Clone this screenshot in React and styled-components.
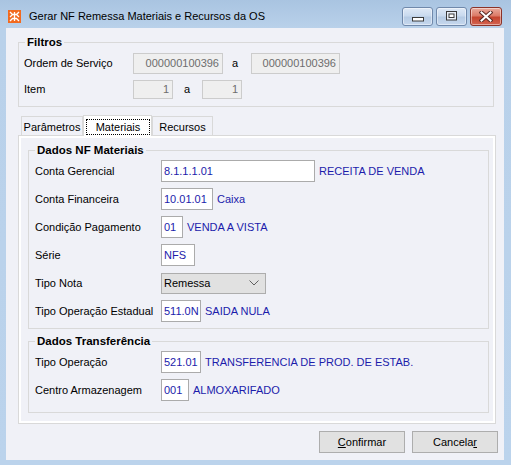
import React from "react";
import styled, { createGlobalStyle } from "styled-components";

const GlobalStyle = createGlobalStyle`
  html, body { margin: 0; padding: 0; }
  body {
    width: 511px; height: 465px; overflow: hidden;
    font-family: "Liberation Sans", Arial, sans-serif;
    font-size: 11px; color: #000;
  }
  * { box-sizing: border-box; }
`;

const BG = "#f0f1f7";
const BLUE = "#1c1cab";

const Window = styled.div`
  width: 511px; height: 465px;
  display: flex; flex-direction: column;
  background: linear-gradient(180deg, #a9c4e1 0px, #b9d1ea 28px, #bbd3ec 100%);
`;

const TitleBar = styled.div`
  height: 28px; flex-shrink: 0;
  display: flex; align-items: center;
  padding: 4px 9px 0 8px;
`;

const Title = styled.span`
  margin-left: 8px;
  font-size: 11px;
  color: #000;
  white-space: nowrap;
`;

const Controls = styled.div`
  margin-left: auto;
  display: flex; gap: 3px;
`;

const CaptionButton = styled.div`
  width: ${(p) => p.$w}px; height: 19px;
  border-radius: 3px;
  border: 1px solid ${(p) => (p.$close ? "#8b3329" : "#7089ab")};
  background: ${(p) =>
    p.$close
      ? "linear-gradient(180deg, #e9ab9d 0%, #dc7b68 45%, #c5452f 55%, #d36350 100%)"
      : "linear-gradient(180deg, #dfe9f6 0%, #c9daee 45%, #b6cbe4 55%, #c6d8ee 100%)"};
  box-shadow: inset 0 0 0 1px rgba(255, 255, 255, 0.45);
  display: flex; align-items: center; justify-content: center;
`;

const Client = styled.div`
  flex: 1;
  margin: 0 7px 5px 6px;
  background: ${BG};
  display: flex; flex-direction: column;
  padding: 7px 6px 0 12px;
`;

const Group = styled.fieldset`
  margin: ${(p) => p.$m || "0"};
  padding: 0;
  border: 1px solid #d9d9d9;
  min-width: 0;
`;

const Legend = styled.legend`
  margin-left: 6px;
  padding: 0 2px;
  font-weight: bold;
  font-size: 11.5px;
  line-height: 14px;
`;

const GroupBody = styled.div`
  display: flex; flex-direction: column;
  padding: ${(p) => p.$pad};
`;

const Row = styled.div`
  display: flex; align-items: center;
  height: ${(p) => p.$h}px;
`;

const Label = styled.span`
  width: ${(p) => p.$w}px;
  flex-shrink: 0;
  white-space: nowrap;
`;

const TextBox = styled.input`
  width: ${(p) => p.$w}px;
  height: ${(p) => p.$h || 22}px;
  flex-shrink: 0;
  margin: 0;
  padding: ${(p) => (p.$off ? "0 3px 0 2px" : "0 1px 0 2px")};
  border: 1px solid ${(p) => (p.$off ? "#cccccc" : "#ababab")};
  background: ${(p) => (p.$off ? "#efefef" : "#ffffff")};
  color: ${(p) => (p.$off ? "#6d6d6d" : BLUE)};
  text-align: ${(p) => (p.$off ? "right" : "left")};
  font-family: inherit;
  font-size: 11px;
  outline: none;
`;

const Conj = styled.span`
  width: ${(p) => p.$w}px;
  padding-left: ${(p) => p.$pl}px;
  flex-shrink: 0;
`;

const Descr = styled.span`
  margin-left: 4px;
  color: ${BLUE};
  white-space: nowrap;
`;

const Combo = styled.div`
  width: 105px; height: 21px;
  border: 1px solid #adadad;
  background: #e1e1e1;
  display: flex; align-items: center; justify-content: space-between;
  padding: 0 6px 0 2px;
`;

const TabStrip = styled.div`
  display: flex; align-items: flex-end;
  height: 21px;
  margin: 8px 0 -1px 3px;
  position: relative; z-index: 1;
`;

const Tab = styled.div`
  width: ${(p) => p.$w}px;
  height: ${(p) => (p.$active ? 21 : 19)}px;
  margin-bottom: ${(p) => (p.$active ? 0 : 1)}px;
  border: 1px solid #d9d9d9;
  border-bottom: none;
  background: ${(p) => (p.$active ? "#ffffff" : BG)};
  display: flex; align-items: center; justify-content: center;
  padding-top: ${(p) => (p.$active ? 0 : 2)}px;
`;

const FocusRing = styled.span`
  flex: 1; align-self: stretch;
  margin: 3px 1px 1px 2px;
  border: 1px dotted #000;
  display: flex; align-items: center; justify-content: center;
`;

const Panel = styled.div`
  margin-right: 2px;
  border: 1px solid #d9d9d9;
  box-shadow: inset 0 0 0 2px #ffffff;
  padding: 7px 6px 10px 9px;
  display: flex; flex-direction: column;
`;

const Footer = styled.div`
  display: flex; justify-content: flex-end; gap: 7px;
  margin-top: 7px;
`;

const Button = styled.button`
  width: 86px; height: 22px;
  margin: 0; padding: 0;
  border: 1px solid #adadad;
  background: #e1e1e1;
  color: #000;
  font-family: inherit;
  font-size: 11px;
  u { text-decoration: underline; }
`;

const AppIcon = () => (
  <svg width="13" height="13" viewBox="0 0 13 13">
    <rect x="0" y="0" width="13" height="13" fill="#f26a1f" />
    <path d="M2 2 L4.5 4.5 L2 7 M11 2 L8.5 4.5 L11 7 M4.5 4.5 L8.5 4.5 M6.5 2 L6.5 11 M2 11 L4.5 8.5 L8.5 8.5 L11 11" stroke="#fff" strokeWidth="1.3" fill="none" />
  </svg>
);

const MinGlyph = () => (
  <svg width="12" height="12" viewBox="0 0 12 12">
    <rect x="0.5" y="7.5" width="11" height="3.5" fill="#fff" stroke="#3a3a3a" />
  </svg>
);

const MaxGlyph = () => (
  <svg width="12" height="10" viewBox="0 0 12 10">
    <rect x="0.5" y="0.5" width="10" height="8.5" fill="#e8eef7" stroke="#3a3a3a" />
    <rect x="3" y="3" width="5" height="3.5" fill="#ffffff" stroke="#3a3a3a" strokeWidth="1" />
  </svg>
);

const CloseGlyph = () => (
  <svg width="14" height="11" viewBox="0 0 14 11">
    <path d="M2.5 1.5 L11.5 9.5 M11.5 1.5 L2.5 9.5" stroke="#5a2a24" strokeWidth="4" strokeLinecap="square" />
    <path d="M2.5 1.5 L11.5 9.5 M11.5 1.5 L2.5 9.5" stroke="#ffffff" strokeWidth="2" strokeLinecap="square" />
  </svg>
);

const Chevron = () => (
  <svg width="10" height="6" viewBox="0 0 10 6">
    <path d="M0.5 0.5 L5 5 L9.5 0.5" stroke="#606060" fill="none" />
  </svg>
);

const materiais = [
  { label: "Conta Gerencial", value: "8.1.1.1.01", w: 154, desc: "RECEITA DE VENDA" },
  { label: "Conta Financeira", value: "10.01.01", w: 52, desc: "Caixa" },
  { label: "Condição Pagamento", value: "01", w: 22, desc: "VENDA A VISTA" },
  { label: "Série", value: "NFS", w: 34 },
  { label: "Tipo Nota", combo: "Remessa" },
  { label: "Tipo Operação Estadual", value: "511.0N", w: 40, desc: "SAIDA NULA" },
];

const transferencia = [
  { label: "Tipo Operação", value: "521.01", w: 40, desc: "TRANSFERENCIA DE PROD. DE ESTAB." },
  { label: "Centro Armazenagem", value: "001", w: 28, desc: "ALMOXARIFADO" },
];

const FieldRow = ({ item }) => (
  <Row $h={28}>
    <Label $w={126}>{item.label}</Label>
    {item.combo ? (
      <Combo role="combobox">
        <span>{item.combo}</span>
        <Chevron />
      </Combo>
    ) : (
      <TextBox $w={item.w} readOnly value={item.value} />
    )}
    {item.desc && <Descr>{item.desc}</Descr>}
  </Row>
);

export default function App() {
  return (
    <Window>
      <GlobalStyle />
      <TitleBar>
        <AppIcon />
        <Title>Gerar NF Remessa Materiais e Recursos da OS</Title>
        <Controls>
          <CaptionButton $w={31}><MinGlyph /></CaptionButton>
          <CaptionButton $w={31}><MaxGlyph /></CaptionButton>
          <CaptionButton $w={32} $close><CloseGlyph /></CaptionButton>
        </Controls>
      </TitleBar>
      <Client>
        <Group $m="0 4px 0 0">
          <Legend>Filtros</Legend>
          <GroupBody $pad="1px 0 4px 5px">
            <Row $h={26}>
              <Label $w={109}>Ordem de Serviço</Label>
              <TextBox $off $w={90} $h={21} readOnly value="000000100396" />
              <Conj $w={28} $pl={9}>a</Conj>
              <TextBox $off $w={89} $h={21} readOnly value="000000100396" />
            </Row>
            <Row $h={26}>
              <Label $w={109}>Item</Label>
              <TextBox $off $w={40} $h={19} readOnly value="1" />
              <Conj $w={29} $pl={11}>a</Conj>
              <TextBox $off $w={40} $h={19} readOnly value="1" />
            </Row>
          </GroupBody>
        </Group>

        <TabStrip>
          <Tab $w={62}>Parâmetros</Tab>
          <Tab $w={69} $active>
            <FocusRing>Materiais</FocusRing>
          </Tab>
          <Tab $w={61}>Recursos</Tab>
        </TabStrip>
        <Panel>
          <Group>
            <Legend>Dados NF Materiais</Legend>
            <GroupBody $pad="0 0 3px 6px">
              {materiais.map((it) => (
                <FieldRow key={it.label} item={it} />
              ))}
            </GroupBody>
          </Group>
          <Group $m="5px 0 0 0">
            <Legend>Dados Transferência</Legend>
            <GroupBody $pad="0 0 8px 6px">
              {transferencia.map((it) => (
                <FieldRow key={it.label} item={it} />
              ))}
            </GroupBody>
          </Group>
        </Panel>

        <Footer>
          <Button><u>C</u>onfirmar</Button>
          <Button>Cancela<u>r</u></Button>
        </Footer>
      </Client>
    </Window>
  );
}
